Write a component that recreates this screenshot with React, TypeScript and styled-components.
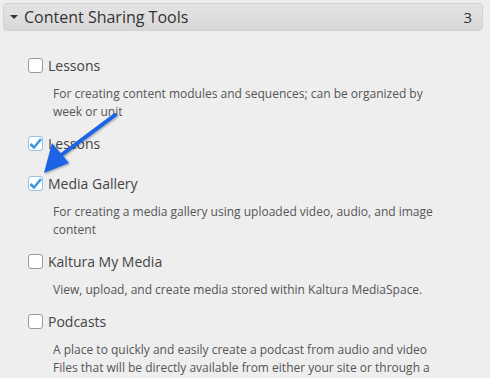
import styled, { createGlobalStyle } from 'styled-components'

const GlobalStyle = createGlobalStyle`
  body {
    margin: 0;
    background-color: #eeeeee;
    font-family: "Open Sans", "Liberation Sans", sans-serif;
  }
`

const Panel = styled.div`
  position: relative;
  padding: 3px 7px 0 3px;
`

const Header = styled.div`
  display: flex;
  align-items: center;
  height: 26px;
  padding: 0 10px 0 6px;
  background: linear-gradient(#e4e4e4, #d8d8d8);
  border: 1px solid #d2d2d2;
  border-radius: 4px;
  color: #333333;
  font-size: 16px;
`

const Caret = styled.span`
  width: 0;
  height: 0;
  margin-right: 6px;
  border-left: 4px solid transparent;
  border-right: 4px solid transparent;
  border-top: 4px solid #333333;
`

const Title = styled.span`
  flex: 1;
`

const Count = styled.span`
  font-size: 15px;
`

const List = styled.div`
  padding: 24px 0 0 25px;
`

const Item = styled.div<{ $gap: number }>`
  margin-bottom: ${(p) => p.$gap}px;
`

const LabelRow = styled.label`
  display: flex;
  align-items: center;
  gap: 5px;
  height: 20px;
  color: #444444;
  font-size: 14px;
`

const Box = styled.span<{ $checked?: boolean }>`
  display: flex;
  align-items: center;
  justify-content: center;
  box-sizing: border-box;
  width: 15px;
  height: 15px;
  background: #ffffff;
  border: 1px solid ${(p) => (p.$checked ? '#8cc4ee' : '#9a9a9a')};
  border-radius: 3px;
`

const Desc = styled.p`
  max-width: 400px;
  margin: 10px 0 0 25px;
  color: #555555;
  font-size: 12px;
  line-height: 18px;
`

const Arrow = styled.svg`
  position: absolute;
  left: 38px;
  top: 108px;
  pointer-events: none;
`

const Check = () => (
  <svg width="13" height="13" viewBox="0 0 13 13">
    <path d="M1.5 7 L5 10.5 L12 2" fill="none" stroke="#3d9ae0" strokeWidth="2.6" strokeLinejoin="round" />
  </svg>
)

type Tool = { name: string; checked?: boolean; desc?: string; gap: number }

const tools: Tool[] = [
  { name: 'Lessons', desc: 'For creating content modules and sequences; can be organized by week or unit', gap: 12 },
  { name: 'Lessons', checked: true, gap: 20 },
  { name: 'Media Gallery', checked: true, desc: 'For creating a media gallery using uploaded video, audio, and image content', gap: 12 },
  { name: 'Kaltura My Media', desc: 'View, upload, and create media stored within Kaltura MediaSpace.', gap: 12 },
  {
    name: 'Podcasts',
    desc: 'A place to quickly and easily create a podcast from audio and video Files that will be directly available from either your site or through a podcast feed.',
    gap: 12,
  },
]

export default function App() {
  return (
    <Panel>
      <GlobalStyle />
      <Header>
        <Caret />
        <Title>Content Sharing Tools</Title>
        <Count>3</Count>
      </Header>
      <List>
        {tools.map((t, i) => (
          <Item key={i} $gap={t.gap}>
            <LabelRow>
              <Box $checked={t.checked}>{t.checked && <Check />}</Box>
              {t.name}
            </LabelRow>
            {t.desc && <Desc>{t.desc}</Desc>}
          </Item>
        ))}
      </List>
      {/* annotation arrow drawn over the list */}
      <Arrow width="90" height="72" viewBox="0 0 90 72">
        <defs>
          <filter id="sh" x="-20%" y="-20%" width="140%" height="140%">
            <feDropShadow dx="1" dy="1" stdDeviation="1" floodColor="#000" floodOpacity="0.35" />
          </filter>
        </defs>
        <g filter="url(#sh)">
          <line x1="77" y1="7" x2="22" y2="48" stroke="#1f63e6" strokeWidth="4" strokeLinecap="round" />
          <polygon points="6,65 14,35 31,55" fill="#1f63e6" />
        </g>
      </Arrow>
    </Panel>
  )
}
